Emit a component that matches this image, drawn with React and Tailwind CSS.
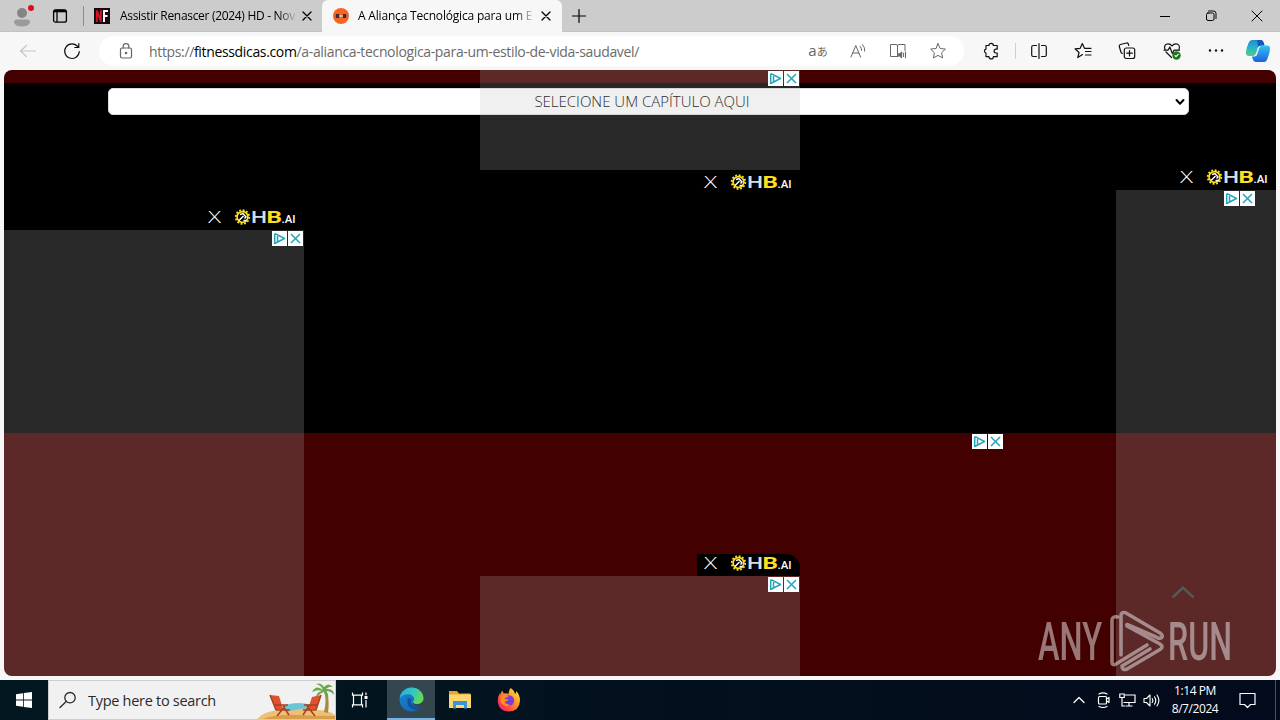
import { clsx } from 'clsx'

const pageIcons = [
  { id: 'translate', Icon: TranslateIcon },
  { id: 'read', Icon: ReadAloudIcon },
  { id: 'reader', Icon: ReaderIcon },
  { id: 'star', Icon: StarIcon },
]

const toolIcons = [
  { id: 'split', Icon: SplitIcon },
  { id: 'favorites', Icon: FavoritesIcon },
  { id: 'collections', Icon: CollectionsIcon },
  { id: 'health', Icon: HealthIcon },
  { id: 'more', Icon: DotsIcon },
]

function Svg({ size = 18, box = 18, width = 1, className, children }) {
  return (
    <svg width={size} height={size} viewBox={`0 0 ${box} ${box}`} fill="none" stroke="currentColor"
      strokeWidth={width} strokeLinecap="round" strokeLinejoin="round" className={clsx('shrink-0', className)}>
      {children}
    </svg>
  )
}

/* ---------- toolbar icons ---------- */

function TranslateIcon() {
  return (
    <span className="flex items-baseline text-[#666] -mt-0.5">
      <span className="text-[15px] leading-none">a</span>
      <span className="text-[11px] leading-none font-['Noto_Sans_CJK_JP',sans-serif]">あ</span>
    </span>
  )
}

function ReadAloudIcon() {
  return (
    <Svg className="ml-px">
      <path d="M1 15 5.800 3.500 10.500 15M2.700 11h6.100M10.200 4.400q1.500 1.600 1.400 4M12.500 2.500q2.600 2.600 2.200 6.600" />
    </Svg>
  )
}

function ReaderIcon() {
  return (
    <Svg>
      <path d="M8.500 3.500v11M8.500 14.500h-7v-12h5.500q1.500 0 1.500 1.500 0-1.500 1.500-1.500h6v6" />
      <path d="M9.500 11.700h1.200l2-1.800v6l-2-1.800H9.500z" fill="currentColor" />
      <path d="M14.600 11v3.600M16.500 10v5.600" />
    </Svg>
  )
}

function StarIcon() {
  return (
    <Svg>
      <path d="m9 1.700 2.200 4.800 5.200.6-3.800 3.600 1 5.200L9 13.400l-4.600 2.500 1-5.200-3.800-3.600 5.200-.6z" />
    </Svg>
  )
}

function PuzzleIcon() {
  return (
    <Svg width={1.2}>
      <path d="M4 3.500h3a2.200 2.200 0 0 1 4.400 0h3.800v3.700h-1.200a1.900 1.900 0 0 0 0 3.800h1.200v3.700h-3.800a2.200 2.200 0 0 1-4.400 0H4V11a2 2 0 0 1 0-3.900z" />
    </Svg>
  )
}

function SplitIcon() {
  return (
    <Svg width={1.2}>
      <path d="M9 1.500v15M6.500 3.500H3.200q-1.500 0-1.500 1.500v8q0 1.500 1.500 1.500h3.300M11.500 3.500h3.300q1.500 0 1.500 1.500v8q0 1.500-1.500 1.500h-3.300" />
    </Svg>
  )
}

function FavoritesIcon() {
  return (
    <Svg width={1.2}>
      <path d="m8.500 12.600-4.700 3 1.200-5.100L1 6.800l5.200-.5L8.300 1.500l2.200 4.800H17M11.500 9.500H17M11.500 13H17" />
    </Svg>
  )
}

function CollectionsIcon() {
  return (
    <Svg width={1.2}>
      <path d="M4.500 11.500q-1.200-.2-1.600-1.500L1.300 4.500q-.3-1.500 1.100-2L8.500 1q1.300-.2 1.800 1l.5 1.500" />
      <rect x="6.300" y="6" width="10.400" height="10.500" rx="2" />
      <path d="M11.500 8.500v5.500M8.800 11.200h5.500" />
    </Svg>
  )
}

function HealthIcon() {
  return (
    <Svg width={1.2}>
      <path d="M2 7.500C.5 3.500 3 1.800 5 1.800c1.800 0 3 .7 4 2.200 1-1.500 2.200-2.200 4-2.200 2.200 0 4.500 2 3 5.700M3 10l5.500 5.500" />
      <path d="M1 8.200h4L6.800 5l2.600 6.500L11 8.200h5.500" />
      <circle cx="13.500" cy="13.500" r="3.600" fill="#167a16" stroke="#167a16" />
      <path d="m12 13.700 1 1 2.200-2.400" stroke="#fff" />
    </Svg>
  )
}

function DotsIcon() {
  return (
    <Svg>
      {[3, 9, 15].map(x => <circle key={x} cx={x} cy="8.500" r="1.200" fill="currentColor" stroke="none" />)}
    </Svg>
  )
}

function CopilotIcon() {
  return (
    <svg width="26" height="24" viewBox="0 0 26 24" className="shrink-0">
      <defs>
        <linearGradient id="cpA" x1="0" y1="0" x2="0" y2="1">
          <stop offset="0" stopColor="#1b8fd8" />
          <stop offset=".5" stopColor="#2bb3c4" />
          <stop offset="1" stopColor="#4fd08b" />
        </linearGradient>
        <linearGradient id="cpB" x1="0" y1="0" x2="0" y2="1">
          <stop offset="0" stopColor="#35c3f0" />
          <stop offset="1" stopColor="#1f5fe0" />
        </linearGradient>
      </defs>
      <path d="M7 1h9q2 0 2.800 3l.7 2.500h-4q-2 0-2.800 2.500l-1.500 5q-.9 3-3 3H4q-3.500 0-3-4 .6-4.500 2.500-9Q4.600 1 7 1z" fill="url(#cpA)" />
      <path d="M12 1h4q2 0 2.800 3l.7 2.500h-4q-2 0-2.500 1.500z" fill="#1557b8" />
      <path d="M19 23h-8.500q-2 0-2.800-3L7 17.500h2.500q2 0 2.800-2.500l1.700-5.500q.9-3 3-3H22q3.500 0 3 4-.6 4.500-2.500 9Q21.400 23 19 23z" fill="url(#cpB)" />
    </svg>
  )
}

/* ---------- browser chrome ---------- */

function TabClose() {
  return <Svg size={10} box={10} width={1.3}><path d="m1 1 8 8M9 1 1 9" /></Svg>
}

function TabBar() {
  return (
    <div className="h-8 shrink-0 bg-[#ccc] flex text-[12px] text-black border-b border-[#c2c2c2]">
      <div className="w-11 flex justify-center relative">
        <svg width="18" height="20" viewBox="0 0 18 20" className="mt-[7px]">
          <circle cx="9" cy="6" r="5" fill="#848484" />
          <path d="M1 15.500q0-3 3-3h10q3 0 3 3-1.500 4-8 4t-8-4z" fill="#9b9b9b" />
        </svg>
        <span className="absolute left-[28px] top-[5px] w-1.5 h-1.5 rounded-full bg-[#e00b1c]" />
      </div>
      <div className="w-10 flex justify-center items-center">
        <svg width="16" height="16" viewBox="0 0 16 16" fill="none" stroke="#000" className="mr-2">
          <rect x="1.600" y="1.800" width="12.800" height="12.400" rx="2" strokeWidth="1.300" />
          <path d="M2 3h12" strokeWidth="2.600" />
          <path d="M5 4v10" strokeWidth="1.300" />
        </svg>
      </div>
      <div className="w-px h-5 bg-[#8c8c8c] self-center -ml-px" />
      <div className="w-[238px] flex items-center pl-[10px]">
        <svg width="16" height="16" viewBox="0 0 16 16" className="shrink-0">
          <path d="M0 0h16v16H0z" fill="#16090c" />
          <path d="M2.800 14V2.200M6.800 14V2.200M2.800 2.500l4 11" stroke="#d3142c" strokeWidth="1.900" />
          <path d="M10 14V3h4M10 8h3.500" stroke="#fff" strokeWidth="1.900" fill="none" />
        </svg>
        <span className="ml-[10px] w-[182px] whitespace-nowrap tracking-[-0.31px] [mask-image:linear-gradient(to_right,#000_158px,transparent_177px)]">
          Assistir Renascer (2024) HD - Nov
        </span>
        <TabClose />
      </div>
      <div className="w-[240px] h-8 rounded-t-md bg-[#f7f7f7] flex items-center pl-[11px]">
        <svg width="16" height="16" viewBox="0 0 16 16" className="shrink-0">
          <circle cx="8" cy="8" r="8" fill="#f4661f" />
          <path d="M3 8h10" stroke="#ddd" strokeWidth="1.400" />
          <path d="M4.500 6v4M11.500 6v4" stroke="#3f2a36" strokeWidth="3.400" />
        </svg>
        <span className="ml-[9px] w-[183px] whitespace-nowrap tracking-[-0.18px] [mask-image:linear-gradient(to_right,#000_158px,transparent_177px)]">
          A Aliança Tecnológica para um E
        </span>
        <TabClose />
      </div>
      <div className="w-[34px] flex items-center justify-center">
        <Svg size={14} box={14} width={1.2}><path d="M7 .5v13M.5 7h13" /></Svg>
      </div>
      <div className="flex-1" />
      <div className="w-[46px] flex items-center justify-center">
        <Svg size={10} box={10}><path d="M0 5.500h10" /></Svg>
      </div>
      <div className="w-[46px] flex items-center justify-center">
        <Svg size={12} box={12}>
          <rect x="1.500" y="3" width="7.500" height="7.500" rx="1.500" />
          <path d="M3.500 1h5q2.500 0 2.500 2.500v5" />
        </Svg>
      </div>
      <div className="w-[46px] flex items-center justify-center">
        <Svg size={12} box={12}><path d="m1 1 10 10M11 1 1 11" /></Svg>
      </div>
    </div>
  )
}

function Toolbar() {
  return (
    <div className="h-[38px] shrink-0 bg-[#f7f7f7] flex items-center text-[#111]">
      <div className="w-14 flex justify-center text-[#c4c4c4]">
        <Svg width={1.2}><path d="M16.500 9H1.500M7.500 3.500 1.500 9l6 5.500" /></Svg>
      </div>
      <div className="w-8 flex justify-center">
        <Svg width={1.2}><path d="M16.300 9.500A7.300 7.300 0 1 1 14.800 4.700M15.800 1.500v4h-4" /></Svg>
      </div>
      <div className="ml-[11px] w-[865px] h-[30px] rounded-full bg-white flex items-center text-[#666]">
        <Svg size={16} box={16} width={1.2} className="ml-[19px]">
          <rect x="2.500" y="5" width="11" height="10" rx="1.500" />
          <path d="M5.200 5V3.500a2.800 2.800 0 0 1 5.600 0V5" />
          <circle cx="8" cy="10" r=".7" fill="currentColor" />
        </Svg>
        <span className="ml-[15px] flex-1 whitespace-nowrap text-[14px] tracking-[-0.345px] text-[#6b6b6b]">
          https://<span className="text-black">fitnessdicas.com</span>/a-alianca-tecnologica-para-um-estilo-de-vida-saudavel/
        </span>
        <div className="flex mr-[6px]">
          {pageIcons.map(({ id, Icon }) => (
            <span key={id} className="w-10 flex justify-center items-center"><Icon /></span>
          ))}
        </div>
      </div>
      <div className="w-[51px] flex justify-center pl-[3px]"><PuzzleIcon /></div>
      <div className="w-px h-4 bg-[#d0d0d0]" />
      <div className="flex ml-px">
        {toolIcons.map(({ id, Icon }) => (
          <span key={id} className="w-[44.2px] flex justify-center"><Icon /></span>
        ))}
      </div>
      <div className="ml-[7px]"><CopilotIcon /></div>
    </div>
  )
}

/* ---------- page content ---------- */

function AdChoices({ className }) {
  return (
    <div className={clsx('absolute flex gap-px text-[#26a3bd]', className)}>
      <svg width="15" height="15" viewBox="0 0 15 15" fill="none" stroke="currentColor" strokeWidth="1.500" className="bg-white">
        <path d="M2.700 2.500v10L12.500 7.500 3.200 2.700M5.500 5v5.500" strokeLinejoin="round" />
      </svg>
      <svg width="15" height="15" viewBox="0 0 15 15" fill="none" stroke="currentColor" strokeWidth="1.500" className="bg-white">
        <path d="m3 3 9 9M12 3l-9 9" />
      </svg>
    </div>
  )
}

function HbBadge({ className }) {
  return (
    <div className={clsx('absolute w-[103px] h-5 bg-black flex items-center', className)}>
      <svg width="103" height="18" viewBox="0 0 103 18">
        <text x="7" y="14.500" fontSize="16" fill="#fff" textLength="13" lengthAdjust="spacingAndGlyphs"
          className="font-['Open_Sans',sans-serif] font-light">X</text>
        <circle cx="41.500" cy="9" r="6.800" fill="none" stroke="#ffdf1c" strokeWidth="1.800" strokeDasharray="1.900 1.660" />
        <circle cx="41.500" cy="9" r="5.400" fill="none" stroke="#ffdf1c" strokeWidth="1.700" />
        <path d="m39 6.500 3-1 3 3.500-1.500 1.500M42.500 8 38 12.500M42.500 12.500h3" stroke="#fff" strokeWidth="1.500" fill="none" />
        <g className="font-['Roboto',sans-serif]">
          <text x="50" y="15" fontSize="17" fontWeight="500" fill="#dcdce8" textLength="16" lengthAdjust="spacingAndGlyphs">H</text>
          <text x="65.500" y="15" fontSize="17" fontWeight="700" fill="#ffdf1c" textLength="15.500" lengthAdjust="spacingAndGlyphs">B</text>
          <text x="80.500" y="15" fontSize="10" fontWeight="500" fill="#fff" textLength="14" lengthAdjust="spacingAndGlyphs">.AI</text>
        </g>
      </svg>
    </div>
  )
}

function AdSlot({ className, children }) {
  return (
    <div className={clsx('absolute bg-[rgba(185,185,185,0.216)]', className)}>
      {children}
    </div>
  )
}

function Watermark() {
  return (
    <svg width="200" height="70" viewBox="0 0 200 70" opacity=".5" className="absolute left-[1034px] top-[536px]">
      <g fill="#eee" fontWeight="500" className="font-['Roboto',sans-serif]">
        <text x="0" y="54" fontSize="53" textLength="64" lengthAdjust="spacingAndGlyphs">ANY</text>
        <text x="130" y="54" fontSize="53" textLength="64" lengthAdjust="spacingAndGlyphs">RUN</text>
      </g>
      <g fill="none" stroke="#eee" strokeWidth="3.600" strokeLinejoin="round" strokeLinecap="round" transform="translate(0 3)">
        <path d="M80 8q-6-1-6 3v42q0 4 4 2l31-19" />
        <path d="M83 46V7q0-5 5-3l34 20q4 3 1 5-2 1-5-1L89 15.500" />
        <path d="M89 17l33 18q4 3 0 5.500L89 60q-5 2-5-3l28-17" />
      </g>
    </svg>
  )
}

function PageView() {
  return (
    <div className="mx-1 h-[606px] shrink-0 rounded-lg overflow-hidden relative bg-[#430000]">
      <div className="mt-[13px] h-[350px] bg-black">
        <div className="ml-[104px] pt-[5px]">
          <div className="w-[1081px] h-[27px] rounded-[5px] bg-white border border-[#ddd] flex items-center text-black text-[15px] font-light">
            <span className="flex-1 text-center whitespace-nowrap">SELECIONE UM CAPÍTULO AQUI</span>
            <Svg size={10} box={10} width={2} className="mr-[3px]"><path d="m1.500 3 3.500 3.700L8.500 3" /></Svg>
          </div>
        </div>
      </div>

      <AdSlot className="left-[476px] top-0 w-[320px] h-[100px]">
        <AdChoices className="right-px top-px" />
      </AdSlot>
      <HbBadge className="left-[693px] top-[102px]" />

      <HbBadge className="left-[197px] top-[137px]" />
      <AdSlot className="left-0 top-[160px] w-[300px] h-[446px]">
        <AdChoices className="right-px top-px" />
      </AdSlot>

      <HbBadge className="left-[1169px] top-[97px]" />
      <AdSlot className="left-[1112px] top-[120px] w-[160px] h-[486px]">
        <AdChoices className="left-[108px] top-px" />
      </AdSlot>

      <AdChoices className="left-[968px] top-[364px]" />

      <HbBadge className="left-[693px] top-[484px] h-[22px] rounded-tr-[14px] pb-1" />
      <AdSlot className="left-[476px] top-[506px] w-[320px] h-[100px]">
        <AdChoices className="right-px top-px" />
      </AdSlot>

      <svg width="24" height="14" viewBox="0 0 24 14" className="absolute left-[1167px] top-[515px]">
        <path d="M1.500 12.500 12 2.500l10.500 10" fill="none" stroke="#555856" strokeWidth="2.600" />
      </svg>
      <Watermark />
    </div>
  )
}

/* ---------- taskbar ---------- */

function BeachArt() {
  return (
    <svg width="78" height="38" viewBox="0 0 78 38" className="shrink-0">
      <path d="M28 24q14-4 26 0v8H28z" fill="#6cc5d4" />
      <path d="M0 38q8-9 26-9 6 2 12 0 10-3 20 0 14 0 20 5v4z" fill="#eebf78" />
      <path d="M6 38q14-5 34-4t38 1v3z" fill="#d99d4c" />
      <path d="M67 31q3-12 0-22l2-1q4 11 2 24z" fill="#a88a3b" />
      <path d="M66 9q-7-6-11 2 6-3 10-1-6 1-6 7 4-5 8-6 1 5 4 8 1-6-2-9 5 0 8 4 0-7-8-6 4-3 7-2-5-5-9 0-3-5-8-3 5 1 7 6z" fill="#6aa84f" />
      <path d="m13 14 9 1 4 13-7 1z" fill="#e0522f" />
      <path d="m64 14-9 2-4 12 8 1z" fill="#e0522f" />
      <path d="M13 14l6 15M19 29h14M20 35l8-10M32 34l-6-9M18 24h13M64 14l-5 15M59 29H46M58 35l-8-10M46 34l6-9M60 24H47" stroke="#a8401f" strokeWidth="1.500" />
    </svg>
  )
}

function EdgeIcon() {
  return (
    <svg width="25" height="25" viewBox="0 0 24 24">
      <defs>
        <linearGradient id="edTop" x1="0" y1="0" x2="1" y2=".4">
          <stop offset="0" stopColor="#2aa5e0" />
          <stop offset=".6" stopColor="#35c9bd" />
          <stop offset="1" stopColor="#62d957" />
        </linearGradient>
        <linearGradient id="edLow" x1="0" y1="0" x2="1" y2="1">
          <stop offset="0" stopColor="#1b86d8" />
          <stop offset="1" stopColor="#1560a8" />
        </linearGradient>
      </defs>
      <circle cx="12" cy="12" r="11.500" fill="url(#edLow)" />
      <path d="M.6 11C1.500 4.500 6.500.5 12 .5c6.500 0 11.500 4.800 11.500 10 0 4-3 6-6.200 6-2.600 0-4-.8-4-1.800 0-.8 1.200-1.200 1.200-3.200 0-2.300-2.300-4.500-5.800-4.500-3.700 0-7 2-8.100 4z" fill="url(#edTop)" />
      <path d="M8.500 10.500c-2 6 2.500 12 9 11.300 2-.4 4-2.300 4.500-3.800-3 1.800-8 1.500-9.800-1.300-1.500-2-1.200-4-.2-5.200z" fill="#12509a" />
      <path d="M13.300 14.700c0 1 1.500 1.800 4 1.800 2.500 0 4.500-1 5.500-2.500l1.200 2-2.200 2.800q-5 .7-7.500-.9-1.700-1.200-1-3.200z" fill="#34464e" />
    </svg>
  )
}

function FolderIcon() {
  return (
    <svg width="22" height="20" viewBox="0 0 22 20">
      <path d="M0 1h8l2 2.500h11.500V18H0z" fill="#e9a52f" />
      <path d="M0 4.500h22V18H0z" fill="#fbd66c" />
      <path d="M4 11h14v7.500h-3V15H7v3.500H4z" fill="#3e93d6" />
      <path d="M7 15h8v3H7z" fill="#fbd66c" />
    </svg>
  )
}

function FirefoxIcon() {
  return (
    <svg width="24" height="24" viewBox="0 0 24 24">
      <defs>
        <linearGradient id="ffBody" x1="1" y1="0" x2="0" y2="1">
          <stop offset="0" stopColor="#fff04a" />
          <stop offset=".4" stopColor="#ff9a25" />
          <stop offset=".75" stopColor="#ff3d4c" />
          <stop offset="1" stopColor="#e0158c" />
        </linearGradient>
      </defs>
      <path d="M13.500 0q4 2.500 4.500 6 1.500-.5 1.300-3Q23 7 23 12.500 22.500 23 12 23.500 1 23 .8 12.500q0-4 2.200-7.500l.5 1.500q.5-2.500 1.800-4 .5 2 1.700 3 2.500-.5 4.500.5.200-3.500 2-6z" fill="url(#ffBody)" />
      <circle cx="12" cy="12.500" r="5.200" fill="#7a3ddb" />
      <path d="M4 8q4-2 8 1-4 0-4.500 2 2 .5 4 0-1 3-4 2.500 1.500 3.500 5.500 3-4 3.500-8-.5Q2.500 13 4 8z" fill="#ff8f1f" />
    </svg>
  )
}

function Taskbar() {
  return (
    <div className="h-10 shrink-0 flex bg-linear-to-r from-[#021820] to-[#030a1b] text-white">
      <div className="w-12 flex items-center justify-center">
        <svg width="16" height="16" viewBox="0 0 16 16" fill="#fff">
          <path d="M0 2.200 7 1.200v6.400H0zM7.800 1.100 16 0v7.600H7.800zM0 8.400h7v6.400l-7-1zM7.800 8.400H16V16l-8.200-1.100z" />
        </svg>
      </div>
      <div className="w-[288px] bg-[#f1f1f1] border border-[#c9cdce] flex items-center text-[#2a2a2a]">
        <Svg width={1.3} className="ml-[10px]"><circle cx="11" cy="6.700" r="5.200" /><path d="M7.200 10.500 1 16.500" /></Svg>
        <span className="ml-[11px] flex-1 pt-0.5 text-[14.5px] tracking-[-0.29px] whitespace-nowrap">Type here to search</span>
        <BeachArt />
      </div>
      <div className="w-[51px] flex items-center justify-center pr-1">
        <svg width="17" height="16" viewBox="0 0 17 16" fill="none" stroke="#fff" strokeWidth="1.200">
          <path d="M1.500.5v2.700h10V.5M1.500 15.500v-2.700h10v2.700M2.500 3.200h8v9.600h-8zM15 .5v2.700M15 8v7.500" />
          <path d="M13.500 4h3v3h-3z" fill="#fff" stroke="none" />
        </svg>
      </div>
      <div className="w-12 bg-[#34464e] border-b-2 border-[#76b2e6] flex items-center justify-center"><EdgeIcon /></div>
      <div className="w-[49px] flex items-center justify-center"><FolderIcon /></div>
      <div className="w-[49px] flex items-center justify-center"><FirefoxIcon /></div>
      <div className="flex-1" />
      <div className="flex items-center">
        <span className="w-6 flex justify-center"><Svg size={12} box={12} width={1.3}><path d="m1 8.500 5-5 5 5" /></Svg></span>
        <span className="w-6 flex justify-center">
          <Svg size={16} box={16} width={1.2}>
            <path d="M4 2q4-2.200 8 0M4 14.500q4 2 8 0M11.500 7l2.500-1.500v5L11.500 9" />
            <rect x="3.500" y="4.500" width="8" height="7.500" rx="1" />
          </Svg>
        </span>
        <span className="w-6 flex justify-center">
          <svg width="17" height="16" viewBox="0 0 17 16" fill="none" stroke="#fff" strokeWidth="1.200">
            <path d="M6 3h10v7.500H4.500M10 10.500V14M6.500 14h7M.8 2h4.400v3.500H.8zM3 5.500V14h3" />
          </svg>
        </span>
        <span className="w-6 flex justify-center">
          <Svg size={17} box={17} width={1.1}>
            <path d="M1 6.500h2.500L7 3v11l-3.500-3.500H1zM9.200 6.500q1.300 2 0 4M11.500 4.800q2.500 3.700 0 7.400M14 3q3.800 5.500 0 11" />
          </Svg>
        </span>
      </div>
      <div className="w-[64px] text-center text-[12px] leading-[18px] pt-[2px] tracking-[-0.42px]">
        <div>1:14 PM</div>
        <div>8/7/2024</div>
      </div>
      <div className="w-10 flex items-center justify-center">
        <Svg size={17} box={17} width={1.2}><path d="M1 1.500h15v11h-4.500l-3 3-3-3H1z" /></Svg>
      </div>
      <div className="w-2" />
      <div className="w-[5px] border-l border-[#4b525e]" />
    </div>
  )
}

export default function App() {
  return (
    <div className="w-[1280px] h-[720px] overflow-hidden flex flex-col bg-[#f7f7f7] font-['Open_Sans','Noto_Sans',sans-serif]">
      <TabBar />
      <Toolbar />
      <PageView />
      <div className="h-1 shrink-0" />
      <Taskbar />
    </div>
  )
}
